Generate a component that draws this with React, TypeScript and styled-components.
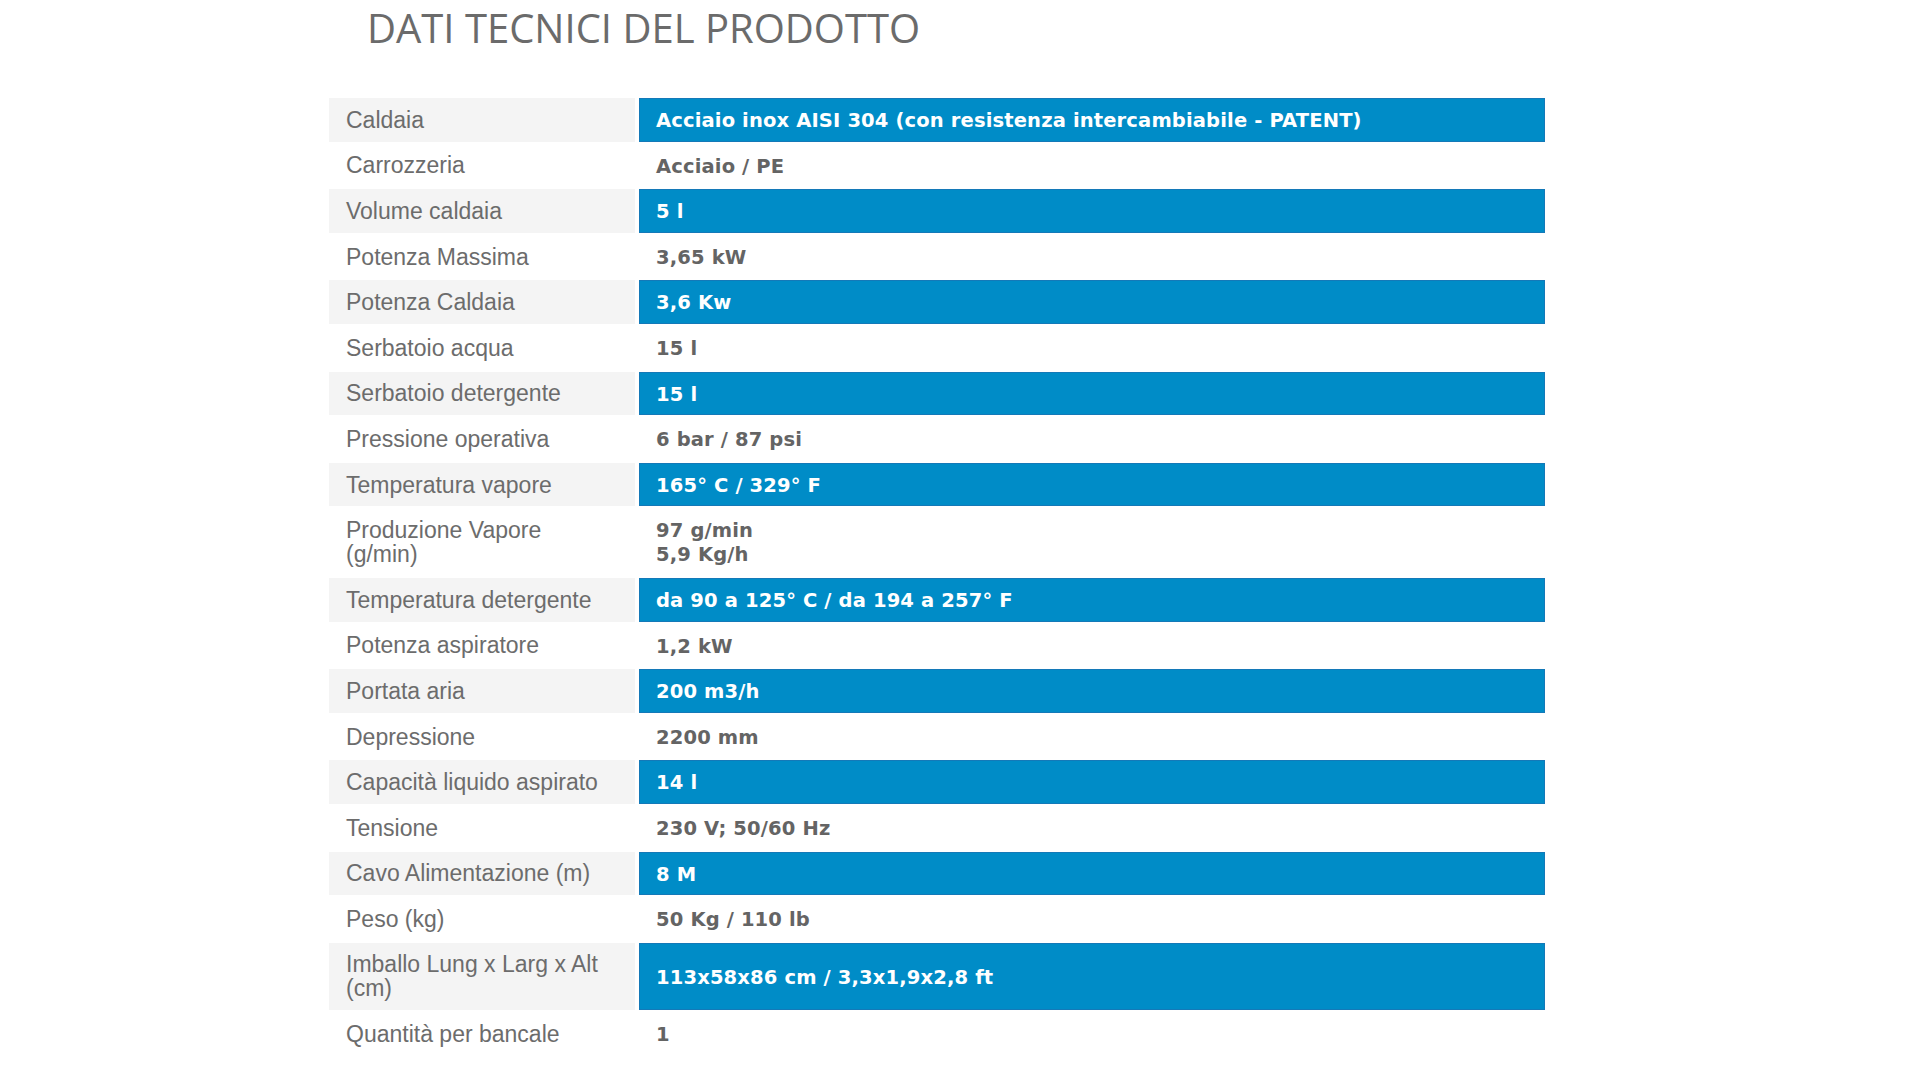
import React from 'react';
import styled, { createGlobalStyle } from 'styled-components';

const GlobalStyle = createGlobalStyle`
  * { box-sizing: border-box; }
  html, body { margin: 0; padding: 0; background: #ffffff; }
  body { font-family: 'Liberation Sans', Arial, sans-serif; }
`;

interface Spec {
  label: string;
  value: string[];
}

const specs: Spec[] = [
  { label: 'Caldaia', value: ['Acciaio inox AISI 304 (con resistenza intercambiabile - PATENT)'] },
  { label: 'Carrozzeria', value: ['Acciaio / PE'] },
  { label: 'Volume caldaia', value: ['5 l'] },
  { label: 'Potenza Massima', value: ['3,65 kW'] },
  { label: 'Potenza Caldaia', value: ['3,6 Kw'] },
  { label: 'Serbatoio acqua', value: ['15 l'] },
  { label: 'Serbatoio detergente', value: ['15 l'] },
  { label: 'Pressione operativa', value: ['6 bar / 87 psi'] },
  { label: 'Temperatura vapore', value: ['165° C / 329° F'] },
  { label: 'Produzione Vapore (g/min)', value: ['97 g/min', '5,9 Kg/h'] },
  { label: 'Temperatura detergente', value: ['da 90 a 125° C / da 194 a 257° F'] },
  { label: 'Potenza aspiratore', value: ['1,2 kW'] },
  { label: 'Portata aria', value: ['200 m3/h'] },
  { label: 'Depressione', value: ['2200 mm'] },
  { label: 'Capacità liquido aspirato', value: ['14 l'] },
  { label: 'Tensione', value: ['230 V; 50/60 Hz'] },
  { label: 'Cavo Alimentazione (m)', value: ['8 M'] },
  { label: 'Peso (kg)', value: ['50 Kg / 110 lb'] },
  { label: 'Imballo Lung x Larg x Alt (cm)', value: ['113x58x86 cm / 3,3x1,9x2,8 ft'] },
  { label: 'Quantità per bancale', value: ['1'] },
];

const Section = styled.section`
  margin-left: 325px;
  width: 1224px;
`;

const Title = styled.h2`
  margin: 0;
  padding-left: 42px;
  font-family: 'Open Sans', 'Liberation Sans', sans-serif;
  font-size: 40px;
  font-weight: 400;
  line-height: normal;
  color: #6b6b6b;
`;

const SpecTable = styled.table`
  margin-top: 41px;
  width: 1224px;
  table-layout: fixed;
  border-collapse: separate;
  border-spacing: 4px 2px;
`;

const LabelCell = styled.td<{ $shaded: boolean }>`
  width: 306px;
  padding: 8.8px 29px 8.8px 16px;
  border: 1px solid transparent;
  background: ${(p) => (p.$shaded ? '#f4f4f4' : '#ffffff')};
  font-family: 'Liberation Sans', Arial, sans-serif;
  font-size: 23px;
  line-height: 24px;
  color: #6c6c6c;
  vertical-align: middle;
`;

const ValueCell = styled.td<{ $shaded: boolean }>`
  padding: 10px 16px 7.6px;
  border: 1px solid ${(p) => (p.$shaded ? '#1479b8' : 'transparent')};
  background: ${(p) => (p.$shaded ? '#008cc7' : '#ffffff')};
  font-family: 'DejaVu Sans', Verdana, sans-serif;
  font-weight: 700;
  font-size: 19.5px;
  letter-spacing: 0.15px;
  line-height: 24px;
  color: ${(p) => (p.$shaded ? '#ffffff' : '#646464')};
  vertical-align: middle;
`;

export default function App() {
  return (
    <>
      <GlobalStyle />
      <Section>
        <Title>DATI TECNICI DEL PRODOTTO</Title>
        <SpecTable>
          <tbody>
            {specs.map((row, ind) => {
              const shaded = ind % 2 === 0;
              return (
                <tr key={`spec-${ind}`}>
                  <LabelCell $shaded={shaded}>{row.label}</LabelCell>
                  <ValueCell $shaded={shaded}>
                    {row.value.map((line, i) => (
                      <React.Fragment key={i}>
                        {i > 0 && <br />}
                        {line}
                      </React.Fragment>
                    ))}
                  </ValueCell>
                </tr>
              );
            })}
          </tbody>
        </SpecTable>
      </Section>
    </>
  );
}
